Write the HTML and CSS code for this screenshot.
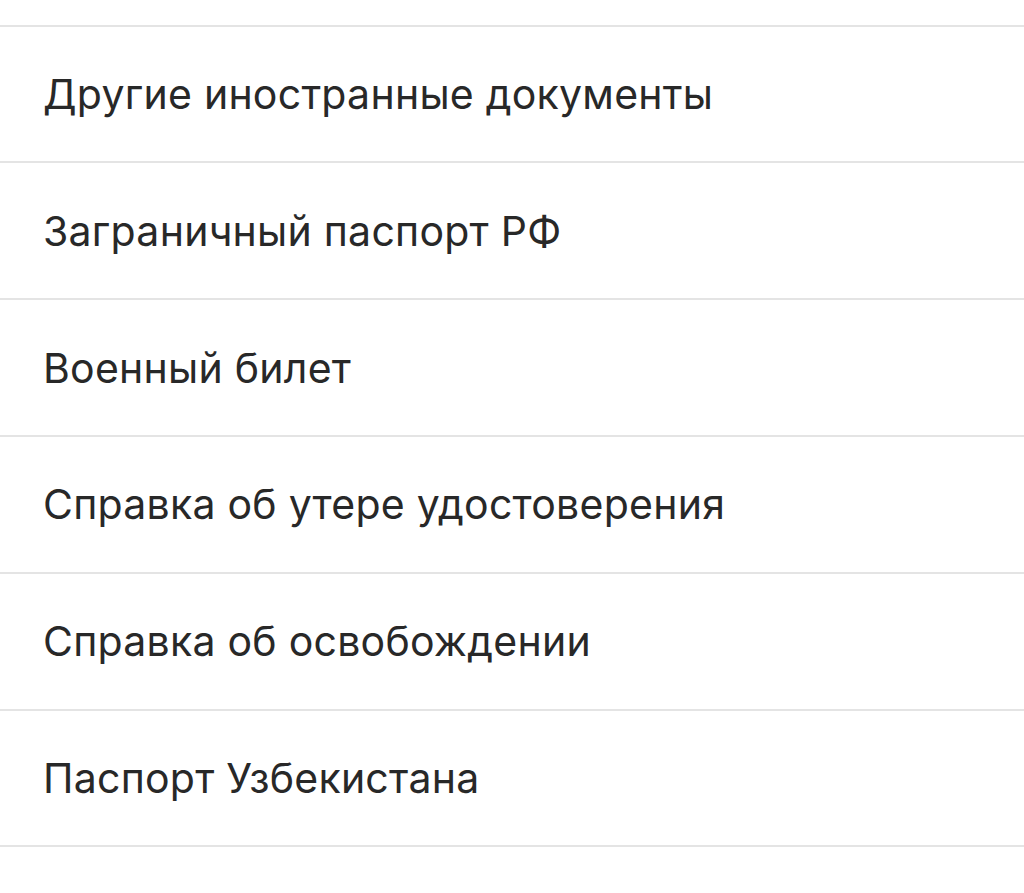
FILE: index.html
```html
<!DOCTYPE html>
<html lang="ru">
<head>
    <meta charset="UTF-8">
    <meta name="viewport" content="width=device-width, initial-scale=1.0">
    <title>Документы</title>
    <link rel="stylesheet" href="styles.css">
</head>
<body>
    <!-- Document type list -->
    <ul class="doc-list">
        <li class="doc-item doc-item-top"></li>
        <li class="doc-item">Другие иностранные документы</li>
        <li class="doc-item">Заграничный паспорт РФ</li>
        <li class="doc-item">Военный билет</li>
        <li class="doc-item">Справка об утере удостоверения</li>
        <li class="doc-item">Справка об освобождении</li>
        <li class="doc-item">Паспорт Узбекистана</li>
        <li class="doc-item doc-item-bottom"></li>
    </ul>
</body>
</html>
```

FILE: styles.css
```css
body {
    margin: 0;
    background: #ffffff;
    font-family: Inter, "Noto Sans", "Liberation Sans", sans-serif;
    color: #282828;
    overflow: hidden;
}

.doc-list {
    list-style: none;
    margin: 0;
    padding: 0;
}

.doc-item {
    box-sizing: border-box;
    height: 136.83px;
    padding: 0 43px;
    display: flex;
    align-items: center;
    border-bottom: 2.5px solid #e4e4e4;
    font-size: 41px;
    letter-spacing: 0.25px;
}

/* rows cut off by the screen edges */
.doc-item-top {
    height: 26.5px;
}

.doc-item-bottom {
    height: 44px;
    border-bottom: none;
}
```
